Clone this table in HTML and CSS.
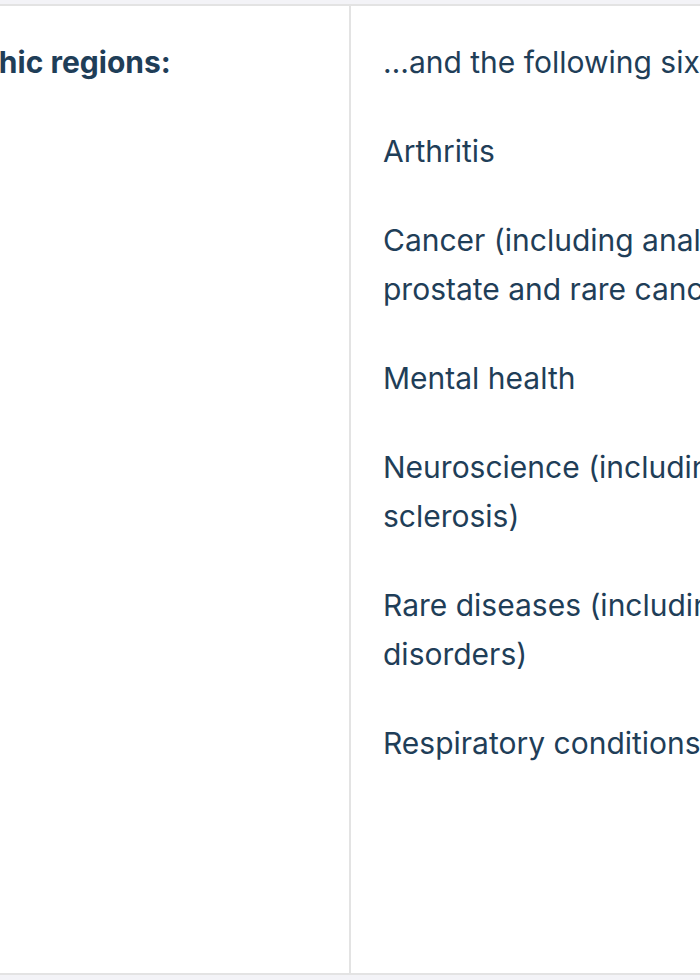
FILE: index.html
```html
<!DOCTYPE html>
<html lang="en">
<head>
<meta charset="utf-8">
<title>Regions and areas</title>
<link rel="stylesheet" href="styles.css">
</head>
<body>
<div class="viewport">
  <table class="grid">
    <tr>
      <td class="cell cell-left"><p class="label">Geographic regions:</p></td>
      <td class="cell cell-right">
        <p class="item">…and the following six therapy areas:</p>
        <p class="item">Arthritis</p>
        <p class="item">Cancer (including analysis of breast, prostate and rare cancers)</p>
        <p class="item">Mental health</p>
        <p class="item">Neuroscience (including multiple sclerosis)</p>
        <p class="item">Rare diseases (including genetic disorders)</p>
        <p class="item">Respiratory conditions</p>
      </td>
    </tr>
  </table>
</div>
</body>
</html>
```

FILE: styles.css
```css
html, body {
  margin: 0;
  padding: 0;
  background: #f3f3f7;
  overflow: hidden;
}
.viewport {
  padding-top: 4px;
  width: 700px;
  height: 980px;
  overflow: hidden;
}
.grid {
  border-collapse: collapse;
  table-layout: fixed;
  width: 1212px;
  background: #ffffff;
  margin-left: -163px;
  height: 971px;
  font-family: Inter, "Noto Sans", sans-serif;
  color: #1f3e58;
}
.cell {
  border: 2px solid #e3e3e3;
  vertical-align: top;
  padding: 32px 32px 0 32px;
}
.cell-left {
  width: 444px;
  padding-left: 34px;
}
.cell-right {
  width: 636px;
}
.label {
  margin: 0;
  font-size: 30px;
  font-weight: 700;
  line-height: 49px;
  white-space: nowrap;
}
.item {
  margin: 0 0 40px 0;
  font-size: 30px;
  line-height: 49px;
  width: 600px;
}
```
